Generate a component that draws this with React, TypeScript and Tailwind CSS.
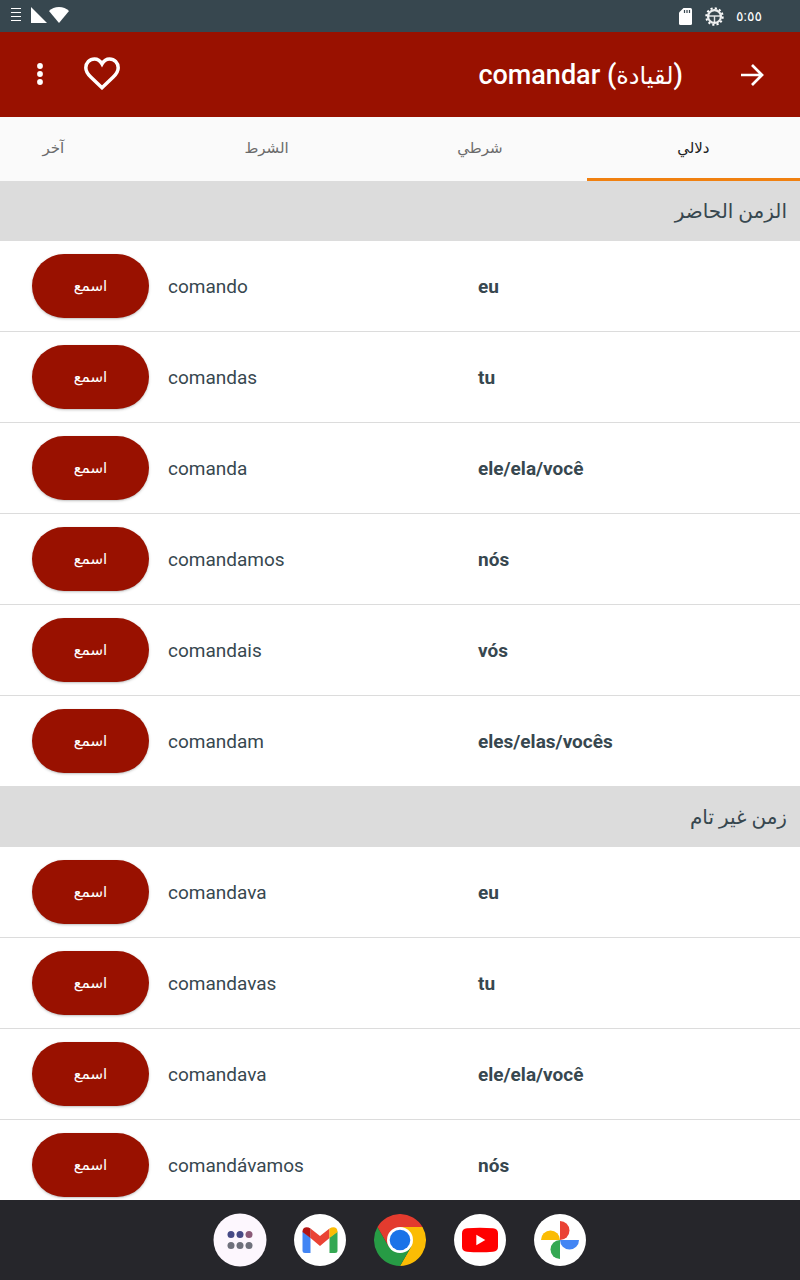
// App.tsx
import React, { useState } from 'react';

interface Conjugation {
  pronoun: string;
  form: string;
}

interface TenseProps {
  title: string;
  rows: Conjugation[];
}

const tabs = ['دلالي', 'شرطي', 'الشرط', 'آخر'];

const tenses: TenseProps[] = [
  {
    title: 'الزمن الحاضر',
    rows: [
      { pronoun: 'eu', form: 'comando' },
      { pronoun: 'tu', form: 'comandas' },
      { pronoun: 'ele/ela/você', form: 'comanda' },
      { pronoun: 'nós', form: 'comandamos' },
      { pronoun: 'vós', form: 'comandais' },
      { pronoun: 'eles/elas/vocês', form: 'comandam' }
    ]
  },
  {
    title: 'زمن غير تام',
    rows: [
      { pronoun: 'eu', form: 'comandava' },
      { pronoun: 'tu', form: 'comandavas' },
      { pronoun: 'ele/ela/você', form: 'comandava' },
      { pronoun: 'nós', form: 'comandávamos' }
    ]
  }
];

const StatusBar: React.FC = () => (
  <div dir="ltr" className="flex h-8 shrink-0 items-center justify-between bg-[#37474f] pl-[11px] pr-[38px] text-white">
    <div className="flex items-center pb-0.5">
      <svg className="mr-[9px] h-4 w-[10px]" viewBox="0 0 10 16" stroke="currentColor" strokeWidth="1">
        <path d="M0 1.500h10M0 5.500h10M0 9.500h10M0 13.500h10" />
      </svg>
      <svg className="h-4 w-[17px]" viewBox="0 0 17 16" fill="currentColor">
        <path d="M1 0l16 16H1z" />
      </svg>
      <svg className="ml-0.5 h-4 w-5" viewBox="0 0 20 16" fill="currentColor">
        <path d="M10 16L0 4C2.700 1.500 6 0 10 0s7.300 1.500 10 4z" />
      </svg>
    </div>
    <div className="flex items-center">
      <svg className="h-[17px] w-[13px]" viewBox="0 0 13 17" fill="currentColor">
        <path d="M4.500 0H11.500Q13 0 13 1.500V15.500Q13 17 11.500 17H1.500Q0 17 0 15.500V4.500z" />
        <path d="M5.500 2v3M8 2v3M10.500 2v3" stroke="#37474f" strokeWidth="1.200" />
      </svg>
      <svg className="ml-[13px] h-[19px] w-[19px]" viewBox="0 0 20 20" fill="none" stroke="currentColor">
        <circle cx="10" cy="10" r="8.700" strokeWidth="2" strokeDasharray="2.300 2.255" />
        <circle cx="10" cy="10" r="6.800" strokeWidth="2.400" opacity="0.9" />
        <path d="M3.500 9.500h13M10 10v6.500" strokeWidth="1.500" opacity="0.85" />
      </svg>
      <span className="ml-3 text-sm leading-5">٥:٥٥</span>
    </div>
  </div>
);

const AppBar: React.FC = () => {
  const [favorite, setFavorite] = useState(false);

  return (
    <header className="flex h-[85px] shrink-0 items-center bg-[#991100] pl-[30px] pr-9 text-white">
      <button aria-label="رجوع" className="flex h-8 w-6 items-center justify-center">
        <svg className="h-6 w-6" viewBox="0 0 24 24" fill="none" stroke="currentColor" strokeWidth="2.700">
          <path d="M1 12h21M12 2l10 10-10 10" />
        </svg>
      </button>
      <h1 className="mr-[57px] flex-1 pt-0.5 text-[27px] font-medium leading-8">
        <bdi dir="ltr">
          comandar (<span className="text-2xl font-normal">لقيادة</span>)
        </bdi>
      </h1>
      <button
        aria-label="المفضلة"
        aria-pressed={favorite}
        onClick={() => setFavorite(!favorite)}
        className="flex h-10 w-10 items-center justify-center pb-0.5"
      >
        <svg
          className="h-[33px] w-9"
          viewBox="0 0 36 33"
          fill={favorite ? 'currentColor' : 'none'}
          stroke="currentColor"
          strokeWidth="3.500"
        >
          <path d="M18 30.700L7 20.300C3.500 17 1.800 14.300 1.800 10.800c0-5 3.800-8.900 8.700-8.900 3 0 5.600 1.700 7.500 5 1.900-3.300 4.500-5 7.500-5 4.900 0 8.700 3.900 8.700 8.900 0 3.500-1.700 6.200-5.200 9.500z" />
        </svg>
      </button>
      <button aria-label="المزيد" className="mr-[32px] flex h-8 w-5 items-center justify-center pb-0.5">
        <svg className="h-[22px] w-[6px]" viewBox="0 0 6 22" fill="currentColor">
          <circle cx="3" cy="3" r="2.900" />
          <circle cx="3" cy="11" r="2.900" />
          <circle cx="3" cy="19" r="2.900" />
        </svg>
      </button>
    </header>
  );
};

const Tense: React.FC<TenseProps> = ({ title, rows }) => (
  <section>
    <h2 className="flex h-[60px] items-center bg-[#dcdcdc] px-[13px] text-xl text-[#37474f]">{title}</h2>
    <table aria-label={title} className="w-full table-fixed border-separate border-spacing-0">
      <tbody>
        {rows.map((row) => (
          <tr key={row.pronoun} className="h-[91px] *:border-b *:border-[#dcdcdc]">
            <th scope="row" dir="ltr" className="w-[40.25%] pt-0.5 text-left font-bold">
              {row.pronoun}
            </th>
            <td dir="ltr" className="pt-0.5 text-left">
              {row.form}
            </td>
            <td dir="ltr" className="w-[168px] pl-8">
              <button
                aria-label={`اسمع ${row.form}`}
                className="block h-16 w-[117px] rounded-full bg-[#991100] text-[15px] text-white shadow-sm shadow-black/20"
              >
                اسمع
              </button>
            </td>
          </tr>
        ))}
      </tbody>
    </table>
  </section>
);

const Dock: React.FC = () => (
  <nav dir="ltr" className="flex h-20 shrink-0 items-center justify-center gap-7 bg-[#26262b]">
    <button aria-label="Apps" className="h-[52px] w-[52px]">
      <svg viewBox="0 0 52 52" className="overflow-visible">
        <circle cx="26" cy="26" r="26.500" fill="#fdf7fe" />
        <g fill="#464a86">
          <circle cx="17" cy="20.500" r="3.500" />
          <circle cx="26" cy="20.500" r="3.500" />
        </g>
        <circle cx="35" cy="20.500" r="3.500" fill="#8b5a78" />
        <g fill="#6f717c">
          <circle cx="17" cy="31.500" r="3.500" />
          <circle cx="26" cy="31.500" r="3.500" />
          <circle cx="35" cy="31.500" r="3.500" />
        </g>
      </svg>
    </button>
    <button aria-label="Gmail" className="h-[52px] w-[52px]">
      <svg viewBox="0 0 52 52">
        <circle cx="26" cy="26" r="26" fill="#fff" />
        <path d="M8.500 17.500l8 6V39H11q-2.500 0-2.500-2.500z" fill="#4285f4" />
        <path d="M43.500 17.500l-8 6V39H41q2.500 0 2.500-2.500z" fill="#34a853" />
        <path d="M16.500 14.500L26 22l9.500-7.500v9.500L26 32l-9.500-8z" fill="#ea4335" />
        <path d="M8.500 17.500c0-4.500 4.500-5.500 8-3v9.500l-8-6z" fill="#b31412" />
        <path d="M43.500 17.500c0-4.500-4.500-5.500-8-3v9.500l8-6z" fill="#fbbc04" />
      </svg>
    </button>
    <button aria-label="Chrome" className="h-[52px] w-[52px]">
      <svg viewBox="0 0 52 52">
        <path d="M26 13H48.520A26 26 0 0 1 26 52L37.260 32.500z" fill="#fbbc04" />
        <path d="M3.480 13A26 26 0 0 0 26 52L37.260 32.500H14.740z" fill="#279b45" />
        <path d="M3.480 13A26 26 0 0 1 48.520 13H26L14.740 32.500z" fill="#e33b2e" />
        <circle cx="26" cy="26" r="13" fill="#fff" />
        <circle cx="26" cy="26" r="10.300" fill="#1a73e8" />
      </svg>
    </button>
    <button aria-label="YouTube" className="h-[52px] w-[52px]">
      <svg viewBox="0 0 52 52">
        <circle cx="26" cy="26" r="26" fill="#fff" />
        <path d="M13 14.300q13-1 26 0 5 .400 5 5v13.400q0 4.600-5 5-13 1-26 0-5-.400-5-5V19.300q0-4.600 5-5z" fill="#f00" />
        <path d="M22.300 20.700v10.600l9-5.300z" fill="#fff" />
      </svg>
    </button>
    <button aria-label="Photos" className="h-[52px] w-[52px]">
      <svg viewBox="0 0 52 52">
        <circle cx="26" cy="26" r="26" fill="#fff" />
        <path d="M26 7a9.500 9.500 0 0 1 0 19z" fill="#ea4335" />
        <path d="M45 26a9.500 9.500 0 0 1-19 0z" fill="#4285f4" />
        <path d="M26 45a9.500 9.500 0 0 1 0-19z" fill="#34a853" />
        <path d="M7 26a9.500 9.500 0 0 1 19 0z" fill="#fbbc04" />
      </svg>
    </button>
  </nav>
);

const App: React.FC = () => {
  const [activeTab, setActiveTab] = useState(tabs[0]);

  return (
    <div
      dir="rtl"
      className="flex h-screen flex-col overflow-hidden bg-white font-['Roboto','Noto_Sans','DejaVu_Sans',sans-serif] text-[19px] text-[#37474f]"
    >
      <StatusBar />
      <AppBar />
      <div role="tablist" className="flex h-16 shrink-0 overflow-hidden bg-[#fafafa]">
        {tabs.map((tab) => (
          <button
            key={tab}
            role="tab"
            aria-selected={tab === activeTab}
            onClick={() => setActiveTab(tab)}
            className={`w-[26.67%] shrink-0 border-b-3 pt-0.5 text-[15px] ${
              tab === activeTab ? 'border-[#f08010] text-[#212121]' : 'border-transparent text-[#6b6b6b]'
            }`}
          >
            {tab}
          </button>
        ))}
      </div>
      <main className="min-h-0 flex-1 overflow-hidden">
        {tenses.map((tense) => (
          <Tense key={tense.title} {...tense} />
        ))}
      </main>
      <Dock />
    </div>
  );
};

export default App;
